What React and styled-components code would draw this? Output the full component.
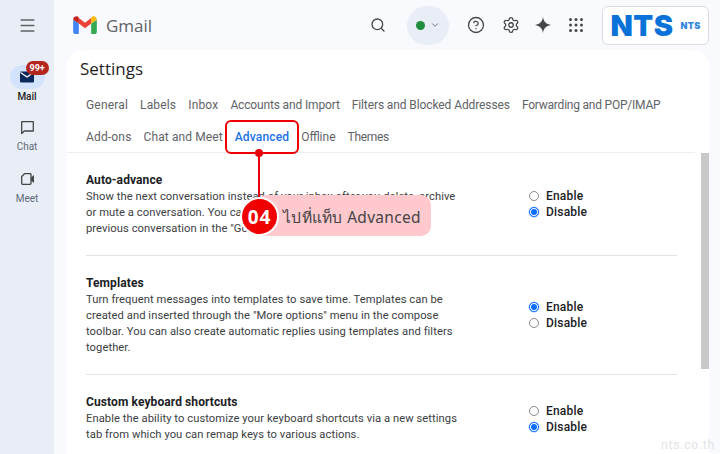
import React from "react";
import styled, { createGlobalStyle } from "styled-components";
import { Menu, Search, ChevronDown, CircleHelp, Settings as Gear } from "lucide-react";

const Global = createGlobalStyle`
  html, body { margin: 0; padding: 0; background: #f8fafd; }
  body { font-family: Roboto, "Noto Sans", "Liberation Sans", sans-serif; }
`;
const Page = styled.div`
  position: relative; width: 720px; height: 454px; overflow: hidden;
  display: flex; background: #f8fafd;
`;
const Rail = styled.nav`
  width: 54px; flex: none; background: #e9eef6;
  display: flex; flex-direction: column; align-items: center;
`;
const Burger = styled.div`
  height: 50px; display: flex; align-items: center; justify-content: center; color: #5f6368;
`;
const RailItem = styled.div`
  display: flex; flex-direction: column; align-items: center;
  margin-top: ${p => p.$top}px; font-size: 10px; line-height: 14px;
  color: ${p => p.$active ? "#1f1f1f" : "#5f6b76"};
  font-weight: ${p => p.$active ? 500 : 400};
`;
const RailIcon = styled.div`
  position: relative; width: 35px; height: 24px; border-radius: 12px;
  display: flex; align-items: center; justify-content: center; margin-bottom: 1px;
  background: ${p => p.$active ? "#d3e3fd" : "transparent"}; color: #444746;
`;
const Badge = styled.span`
  position: absolute; top: -4px; left: 16px; height: 14px; padding: 0 4px; border-radius: 7px;
  background: #b3261e; color: #fff; font-size: 9px; line-height: 14px; font-weight: 700;
`;
const Main = styled.div`
  flex: 1; min-width: 0; display: flex; flex-direction: column;
`;
const Header = styled.header`
  height: 50px; flex: none; display: flex; align-items: center; padding-left: 19px;
`;
const Brand = styled.div`
  display: flex; align-items: center; gap: 9px; font-size: 17px; color: #5f6368; width: 296px;
  font-family: "Open Sans", Roboto, sans-serif;
`;
const Tools = styled.div`
  display: flex; align-items: center; color: #444746;
`;
const Status = styled.div`
  width: 42px; height: 39px; border-radius: 20px; background: #e9eef6; margin: 0 18px 0 20px;
  display: flex; align-items: center; justify-content: center; gap: 5px; color: #5f6368;
`;
const Dot = styled.span`
  width: 9px; height: 9px; border-radius: 50%; background: #1e8e3e;
`;
const ToolIcon = styled.div`
  width: 18px; height: 18px; display: flex; align-items: center; justify-content: center;
  margin-right: ${p => p.$gap}px;
`;
const LogoCard = styled.div`
  width: 107px; height: 39px; box-sizing: border-box; border: 1px solid #dadce0; border-radius: 6px; background: #fff;
  display: flex; align-items: center; justify-content: center; gap: 7px; color: #0a72d8;
  font-family: Inter, sans-serif; font-weight: 900;
`;
const LogoBig = styled.span`
  font-size: 29px; line-height: 29px; letter-spacing: .5px;
`;
const LogoSmall = styled.span`
  font-size: 9px; letter-spacing: .3px; opacity: .85;
`;
const Body = styled.div`
  flex: 1; min-height: 0; display: flex; padding: 0 11px 0 13px;
`;
const Card = styled.section`
  flex: 1; min-width: 0; position: relative; background: #fff; border-radius: 16px 16px 0 0; display: flex; flex-direction: column;
`;
const Title = styled.h1`
  margin: 0; padding: 8px 13px 0; font-size: 17px; line-height: 22px; font-weight: 400; color: #1f1f1f;
  font-family: "Open Sans", Roboto, sans-serif;
`;
const Tabs = styled.div`
  padding: 16px 19px 0; margin-right: 14px; height: 73px; box-sizing: border-box; border-bottom: 1px solid #eeeeee;
  display: flex; flex-direction: column; gap: 13px;
`;
const TabRow = styled.div`
  display: flex; gap: 12px;
`;
const Tab = styled.span`
  font-size: 12px; line-height: 19px; letter-spacing: ${p => p.$ls ?? 0.17}px; white-space: nowrap;
  color: ${p => p.$active ? "#1a73e8" : "#5f6368"};
  font-weight: ${p => p.$active ? 500 : 400};
`;
const Scroller = styled.div`
  flex: 1; min-height: 0; position: relative; overflow: hidden;
`;
const Thumb = styled.div`
  position: absolute; top: 0; right: 0; width: 8px; height: 216px; background: #c9c9c9;
`;
const Section = styled.div`
  margin: 0 32px 0 19px; padding: 19px 0 18px; display: flex;
  border-bottom: ${p => p.$last ? "none" : "1px solid #e3e3e3"};
`;
const Text = styled.div`
  width: 443px; flex: none; font-size: 11.2px; line-height: 16px; letter-spacing: .065px; color: #3c4043;
`;
const Heading = styled.div`
  font-weight: 700; font-size: 12px; letter-spacing: .1px; margin-bottom: 1px; color: #202124;
`;
const Options = styled.div`
  display: flex; flex-direction: column; padding-top: ${p => p.$top}px;
`;
const Option = styled.label`
  display: flex; align-items: center; gap: 7px; height: 16px; font-size: 12px; font-weight: 500; letter-spacing: .2px; color: #202124;
`;
const Radio = styled.span`
  width: 10px; height: 10px; border-radius: 50%; box-sizing: border-box;
  border: 1px solid ${p => p.$on ? "#0a6cff" : "#8a8a8a"}; background: #fff;
  display: flex; align-items: center; justify-content: center;
  box-shadow: ${p => p.$on ? "0 0 0 .5px #9cc4ff" : "none"};
  &::after { content: ""; width: 6px; height: 6px; border-radius: 50%; background: ${p => p.$on ? "#0a6cff" : "transparent"}; }
`;
const Highlight = styled.div`
  position: absolute; left: 225px; top: 120px; width: 74px; height: 34px; box-sizing: border-box;
  border: 2px solid #f00000; border-radius: 6px;
`;
const Pin = styled.div`
  position: absolute; left: 255px; top: 149px; width: 8px; height: 8px; border-radius: 50%; background: #e8000d;
`;
const Leader = styled.div`
  position: absolute; left: 258px; top: 153px; width: 2px; height: 46px; background: #e8000d;
`;
const Callout = styled.div`
  position: absolute; left: 256px; top: 195px; width: 175px; height: 41px; border-radius: 10px; background: #ffc9ce;
  display: flex; align-items: center; padding: 3px 0 0 27px; box-sizing: border-box;
  font-size: 15.500px; letter-spacing: .3px; color: #444; white-space: nowrap; font-family: "Noto Sans", "DejaVu Sans", sans-serif;
`;
const Num = styled.div`
  position: absolute; left: 240px; top: 197px; width: 39px; height: 39px; box-sizing: border-box; border-radius: 50%;
  background: #f00000; border: 2px solid #fff; color: #fff; font-weight: 700; font-size: 19px; letter-spacing: 1px;
  display: flex; align-items: center; justify-content: center; font-family: "Open Sans", sans-serif;
`;
const Mark = styled.div`
  position: absolute; right: 5px; bottom: 2px; font-size: 12px; letter-spacing: .8px; color: #e3e5e8;
`;

const GmailLogo = () => (
  <svg width="24" height="18" viewBox="0 0 25 19">
    <path d="M0 4v13a2 2 0 0 0 2 2h4V8z" fill="#4285f4"/>
    <path d="M25 4v13a2 2 0 0 1-2 2h-4V8z" fill="#34a853"/>
    <path d="M6 19V8l6.500 5L19 8v-6l-6.500 5L6 2z" fill="#ea4335"/>
    <path d="M0 4c0-3 3.500-5 6-2.500V8z" fill="#c5221f"/>
    <path d="M25 4c0-3-3.500-5-6-2.500V8z" fill="#fbbc04"/>
  </svg>
);
const MailIcon = () => (
  <svg width="14" height="12" viewBox="0 0 14 12">
    <rect width="14" height="11" y="0.5" rx="1" fill="#0b2a5b"/>
    <path d="M0.500 1.500L7 6l6.500-4.500" fill="none" stroke="#fff" strokeWidth="1.200"/>
  </svg>
);
const ChatIcon = () => (
  <svg width="15" height="15" viewBox="0 0 15 15" fill="none" stroke="#444746" strokeWidth="1.300" strokeLinejoin="round">
    <path d="M1.700 1.700h11.600v9.300H4.300l-2.600 2.600z"/>
  </svg>
);
const MeetIcon = () => (
  <svg width="15" height="14" viewBox="0 0 15 14" fill="none" stroke="#444746" strokeWidth="1.300" strokeLinejoin="round">
    <path d="M4.500 1.700h5.700a.8.8 0 0 1 .8.800v9a.8.8 0 0 1-.8.800H2.500a.8.8 0 0 1-.8-.800V4.500z"/>
    <path d="M11 5.500l3-2.500v8l-3-2.500z" fill="#444746" stroke="none"/>
  </svg>
);
const Spark = () => (
  <svg width="16" height="16" viewBox="0 0 16 16"><path d="M8 0c.6 4.600 2.800 7 8 8-5.200 1-7.400 3.400-8 8-.6-4.600-2.800-7-8-8 5.200-1 7.400-3.400 8-8z" fill="#444746"/></svg>
);
const Apps = () => (
  <svg width="14" height="14" viewBox="0 0 14 14" fill="#444746">
    {[1.5, 7, 12.5].flatMap(y => [1.5, 7, 12.5].map(x => <circle key={x + "-" + y} cx={x} cy={y} r="1.5"/>))}
  </svg>
);

const RadioPair = ({ on, top }) => (
  <Options $top={top}>
    <Option><Radio $on={on === "enable"} />Enable</Option>
    <Option><Radio $on={on === "disable"} />Disable</Option>
  </Options>
);

export default function App() {
  return (
    <Page>
      <Global />
      <Rail>
        <Burger><Menu size={19} strokeWidth={1.8} /></Burger>
        <RailItem $active $top={15}>
          <RailIcon $active><MailIcon /><Badge>99+</Badge></RailIcon>Mail
        </RailItem>
        <RailItem $top={11}>
          <RailIcon><ChatIcon /></RailIcon>Chat
        </RailItem>
        <RailItem $top={13}>
          <RailIcon><MeetIcon /></RailIcon>Meet
        </RailItem>
      </Rail>
      <Main>
        <Header>
          <Brand><GmailLogo />Gmail</Brand>
          <Tools>
            <ToolIcon><Search size={16} strokeWidth={2} /></ToolIcon>
            <Status><Dot /><ChevronDown size={10} strokeWidth={2} /></Status>
            <ToolIcon $gap={17}><CircleHelp size={18} strokeWidth={1.7} /></ToolIcon>
            <ToolIcon $gap={14}><Gear size={18} strokeWidth={1.7} /></ToolIcon>
            <ToolIcon $gap={15}><Spark /></ToolIcon>
            <ToolIcon $gap={17}><Apps /></ToolIcon>
            <LogoCard><LogoBig>NTS</LogoBig><LogoSmall>NTS</LogoSmall></LogoCard>
          </Tools>
        </Header>
        <Body>
          <Card>
            <Title>Settings</Title>
            <Tabs>
              <TabRow>
                <Tab>General</Tab><Tab>Labels</Tab><Tab>Inbox</Tab><Tab $ls={-0.15}>Accounts and Import</Tab>
                <Tab $ls={-0.1}>Filters and Blocked Addresses</Tab><Tab $ls={-0.22}>Forwarding and POP/IMAP</Tab>
              </TabRow>
              <TabRow>
                <Tab>Add-ons</Tab><Tab $ls={0.1}>Chat and Meet</Tab><Tab $active $ls={0.15}>Advanced</Tab><Tab $ls={0}>Offline</Tab><Tab $ls={-0.3}>Themes</Tab>
              </TabRow>
            </Tabs>
            <Scroller>
              <Thumb />
              <Section>
                <Text>
                  <Heading>Auto-advance</Heading>
                  Show the next conversation instead of your inbox after you delete, archive<br />
                  or mute a conversation. You can choose to go to either the next or<br />
                  previous conversation in the "Go to" setting below.
                </Text>
                <RadioPair on="disable" top={16} />
              </Section>
              <Section>
                <Text>
                  <Heading>Templates</Heading>
                  Turn frequent messages into templates to save time. Templates can be<br />
                  created and inserted through the "More options" menu in the compose<br />
                  toolbar. You can also create automatic replies using templates and filters<br />
                  together.
                </Text>
                <RadioPair on="enable" top={24} />
              </Section>
              <Section $last>
                <Text>
                  <Heading>Custom keyboard shortcuts</Heading>
                  Enable the ability to customize your keyboard shortcuts via a new settings<br />
                  tab from which you can remap keys to various actions.
                </Text>
                <RadioPair on="disable" top={9} />
              </Section>
            </Scroller>
          </Card>
        </Body>
      </Main>
      <Highlight />
      <Leader />
      <Pin />
      <Callout>ไปที่แท็บ Advanced</Callout>
      <Num>04</Num>
      <Mark>nts.co.th</Mark>
    </Page>
  );
}
